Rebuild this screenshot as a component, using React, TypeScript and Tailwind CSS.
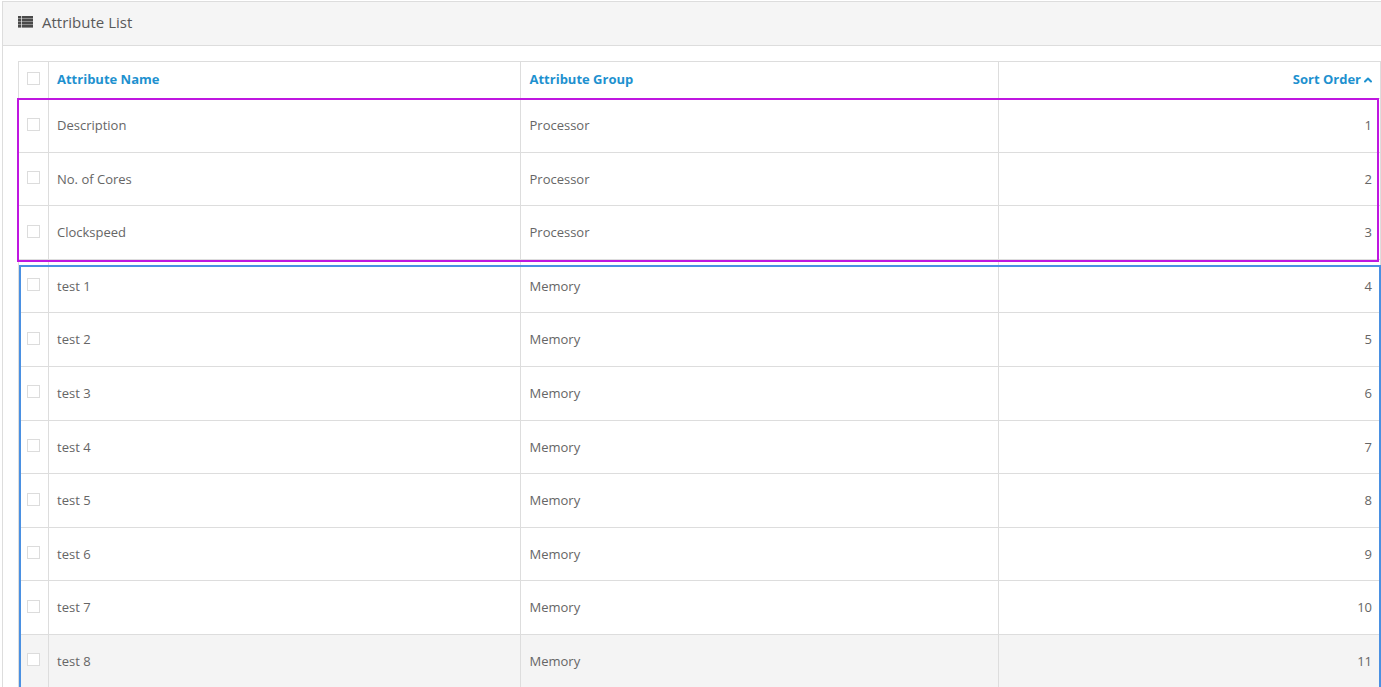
import { ChevronUp } from 'lucide-react';

const rows = [
  { name: 'Description', group: 'Processor', sort: 1 },
  { name: 'No. of Cores', group: 'Processor', sort: 2 },
  { name: 'Clockspeed', group: 'Processor', sort: 3 },
  { name: 'test 1', group: 'Memory', sort: 4 },
  { name: 'test 2', group: 'Memory', sort: 5 },
  { name: 'test 3', group: 'Memory', sort: 6 },
  { name: 'test 4', group: 'Memory', sort: 7 },
  { name: 'test 5', group: 'Memory', sort: 8 },
  { name: 'test 6', group: 'Memory', sort: 9 },
  { name: 'test 7', group: 'Memory', sort: 10 },
  { name: 'test 8', group: 'Memory', sort: 11 },
];

function Check() {
  return <span className="mb-[2.6px] block h-[13px] w-[13px] border border-[#dcdcdc] bg-white" />;
}

function ListIcon() {
  return (
    <svg width="15" height="12" viewBox="0 0 15 12" className="mb-[1px] fill-[#4a4a4a]">
      {[0, 3, 6, 9].map((y) => (
        <g key={y}>
          <rect x="0" y={y} width="3" height="2.6" />
          <rect x="3.7" y={y} width="11.3" height="2.6" />
        </g>
      ))}
    </svg>
  );
}

export default function App() {
  return (
    <div className="h-[687px] overflow-hidden bg-white pl-[2px] pt-px font-['Open_Sans',sans-serif] text-[13px] text-[#666]">
      <div className="h-[800px] border-l border-t border-[#ddd]">
        {/* panel heading */}
        <div className="flex h-[44px] items-center gap-[9px] border-b border-[#ddd] bg-[#f5f5f5] pb-[2px] pl-[15px] text-[15px] text-[#595959]">
          <ListIcon />
          <span>Attribute List</span>
        </div>

        {/* table */}
        <div className="relative ml-[15px] mt-[15px]">
          <table className="w-[1363px] table-fixed border-collapse border border-[#ddd]">
            <colgroup>
              <col className="w-[30px]" />
              <col className="w-[472px]" />
              <col className="w-[478px]" />
              <col />
            </colgroup>
            <thead>
              <tr className="h-[37px] font-bold text-[#1e91cf]">
                <td className="border border-[#ddd] pl-[8px]"><Check /></td>
                <td className="border border-[#ddd] pl-[8px]">Attribute Name</td>
                <td className="border border-[#ddd] pl-[8.5px]">Attribute Group</td>
                <td className="border border-[#ddd] pr-[6px] text-right">
                  Sort Order
                  <ChevronUp className="ml-[1px] inline h-[12px] w-[12px] align-[-1.5px]" strokeWidth={4} />
                </td>
              </tr>
            </thead>
            <tbody>
              {rows.map((r) => (
                <tr key={r.sort} className={r.sort === 11 ? 'h-[53.6px] bg-[#f4f4f4]' : 'h-[53.6px]'}>
                  <td className="border border-[#ddd] pl-[8px]"><Check /></td>
                  <td className="border border-[#ddd] pl-[8px] pt-[1px]">{r.name}</td>
                  <td className="border border-[#ddd] pl-[8.5px] pt-[1px]">{r.group}</td>
                  <td className="border border-[#ddd] pr-[8px] pt-[1px] text-right">{r.sort}</td>
                </tr>
              ))}
            </tbody>
          </table>

          {/* annotation boxes drawn over the screenshot */}
          <div className="absolute left-[-1px] top-[37px] h-[164px] w-[1362px] border-2 border-[#bf17e0]" />
          <div className="absolute left-[1px] top-[204px] h-[500px] w-[1362px] border-2 border-[#4a90e2]" />
        </div>
      </div>
    </div>
  );
}
